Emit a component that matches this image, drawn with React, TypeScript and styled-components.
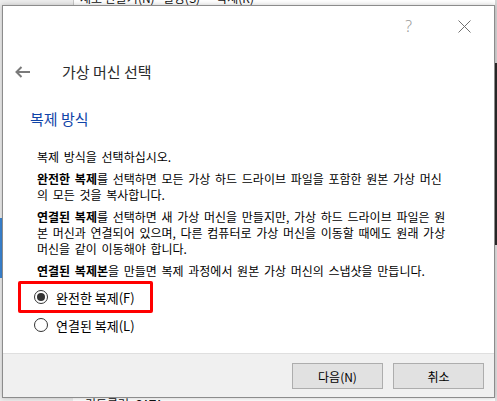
import React from "react";
import styled, { createGlobalStyle } from "styled-components";

const Global = createGlobalStyle`
  html, body { margin: 0; padding: 0; background: #ffffff; }
  body { font-family: "Noto Sans CJK KR", "Noto Sans", sans-serif; }
`;

const Desktop = styled.div`
  position: relative;
  width: 497px;
  height: 401px;
  overflow: hidden;
  background: #ffffff;
`;

const BackPanel = styled.div<{ $l: number; $t: number; $w: number; $h: number; $bg: string }>`
  position: absolute;
  left: ${(p) => p.$l}px;
  top: ${(p) => p.$t}px;
  width: ${(p) => p.$w}px;
  height: ${(p) => p.$h}px;
  background: ${(p) => p.$bg};
`;

const BackText = styled.div<{ $l: number; $t: number }>`
  position: absolute;
  left: ${(p) => p.$l}px;
  top: ${(p) => p.$t}px;
  font-size: 12px;
  line-height: 14px;
  color: #111;
  white-space: nowrap;
`;

const Dialog = styled.div`
  position: absolute;
  left: 2px;
  top: 5px;
  width: 491px;
  height: 391px;
  border: 1px solid #8c8c8c;
  background: #ffffff;
  box-shadow: 0 0 5px rgba(0, 0, 0, 0.22);
  display: flex;
  flex-direction: column;
`;

const TitleBar = styled.div`
  height: 40px;
  display: flex;
  align-items: center;
  justify-content: flex-end;
  padding-right: 23px;
  gap: 46px;
`;

const HelpGlyph = styled.span`
  font-family: "Noto Sans", sans-serif;
  font-size: 16px;
  font-weight: 300;
  color: #9a9a9a;
  line-height: 20px;
`;

const Header = styled.div`
  height: 52px;
  display: flex;
  align-items: center;
  padding-left: 11px;
`;

const Title = styled.h1`
  margin: 0 0 0 31px;
  font-size: 15px;
  font-weight: 400;
  color: #2b2b2b;
  line-height: 20px;
`;

const Content = styled.div`
  flex: 1;
  display: flex;
  flex-direction: column;
  padding-left: 27px;
`;

const Heading = styled.h2`
  margin: 11px 0 0 0;
  font-size: 15px;
  font-weight: 400;
  color: #0f44a8;
  line-height: 20px;
`;

const Body = styled.div`
  margin-top: 20px;
  padding-left: 7px;
`;

const Para = styled.p`
  margin: 0 0 6px 0;
  font-size: 12px;
  line-height: 16px;
  color: #000;
  white-space: nowrap;
  word-spacing: 2px;
  b { font-weight: 700; }
  &:last-child { margin-bottom: 0; }
`;

const Highlight = styled.div`
  margin: 2px 0 0 -12px;
  width: 116px;
  height: 26px;
  border: 3px solid #ff0000;
  border-radius: 2px;
  display: flex;
  align-items: center;
  padding-left: 13px;
`;

const RadioRow = styled.label<{ $indent?: boolean }>`
  display: flex;
  align-items: center;
  gap: 8px;
  height: 20px;
  margin-left: ${(p) => (p.$indent ? "4px" : "0")};
  margin-top: ${(p) => (p.$indent ? "2px" : "0")};
  font-size: 13px;
  color: #000;
  white-space: nowrap;
`;

const RadioCircle = styled.span<{ $on?: boolean }>`
  width: 12px;
  height: 12px;
  border-radius: 50%;
  border: 1px solid #333;
  background: #fff;
  display: flex;
  align-items: center;
  justify-content: center;
  &::after {
    content: "";
    display: ${(p) => (p.$on ? "block" : "none")};
    width: 8px;
    height: 8px;
    border-radius: 50%;
    background: #333;
  }
`;

const Footer = styled.div`
  height: 44px;
  border-top: 1px solid #dfdfdf;
  background: #f0f0f0;
  display: flex;
  align-items: flex-start;
  justify-content: flex-end;
  padding: 9px 10px 0 0;
  gap: 10px;
  box-sizing: border-box;
`;

const Button = styled.button`
  width: 91px;
  height: 26px;
  background: #e1e1e1;
  border: 1px solid #adadad;
  font-family: "Noto Sans CJK KR", sans-serif;
  font-size: 12px;
  color: #000;
  padding: 0;
`;

const ArrowIcon = () => (
  <svg width="17" height="12" viewBox="0 0 17 12">
    <path d="M16 6H2.5M7.5 1L2.5 6l5 5" fill="none" stroke="#7a7a7a" strokeWidth="2" />
  </svg>
);

const CloseIcon = () => (
  <svg width="13" height="13" viewBox="0 0 13 13">
    <path d="M0.5 0.5l12 12M12.5 0.5l-12 12" stroke="#707070" strokeWidth="1" />
  </svg>
);

export default function App() {
  return (
    <>
      <Global />
      <Desktop>
        <BackPanel $l={0} $t={0} $w={73} $h={401} $bg="#ededed" />
        <BackPanel $l={73} $t={0} $w={1} $h={6} $bg="#c8c8c8" />
        <BackPanel $l={0} $t={218} $w={2} $h={60} $bg="#3a86d6" />
        <BackPanel $l={495} $t={0} $w={2} $h={63} $bg="#d6d6d6" />
        <BackPanel $l={495} $t={63} $w={2} $h={182} $bg="#2a2a2a" />
        <BackPanel $l={495} $t={245} $w={2} $h={156} $bg="#e2e2e2" />
        <BackText $l={80} $t={-9}>새로 만들기(N)&nbsp;&nbsp;&nbsp;설정(S)&nbsp;&nbsp;&nbsp;&nbsp;&nbsp;&nbsp;삭제(R)</BackText>
        <BackText $l={85} $t={397}>컨트롤러: SATA</BackText>
        <Dialog>
          <TitleBar>
            <HelpGlyph>?</HelpGlyph>
            <CloseIcon />
          </TitleBar>
          <Header>
            <ArrowIcon />
            <Title>가상 머신 선택</Title>
          </Header>
          <Content>
            <Heading>복제 방식</Heading>
            <Body>
              <Para>복제 방식을 선택하십시오.</Para>
              <Para>
                <b>완전한 복제</b>를 선택하면 모든 가상 하드 드라이브 파일을 포함한 원본 가상 머신
                <br />
                의 모든 것을 복사합니다.
              </Para>
              <Para>
                <b>연결된 복제</b>를 선택하면 새 가상 머신을 만들지만, 가상 하드 드라이브 파일은 원
                <br />
                본 머신과 연결되어 있으며, 다른 컴퓨터로 가상 머신을 이동할 때에도 원래 가상
                <br />
                머신을 같이 이동해야 합니다.
              </Para>
              <Para>
                <b>연결된 복제본</b>을 만들면 복제 과정에서 원본 가상 머신의 스냅샷을 만듭니다.
              </Para>
            </Body>
            <Highlight>
              <RadioRow>
                <RadioCircle $on />
                완전한 복제(F)
              </RadioRow>
            </Highlight>
            <RadioRow $indent>
              <RadioCircle />
              연결된 복제(L)
            </RadioRow>
          </Content>
          <Footer>
            <Button>다음(N)</Button>
            <Button>취소</Button>
          </Footer>
        </Dialog>
      </Desktop>
    </>
  );
}
